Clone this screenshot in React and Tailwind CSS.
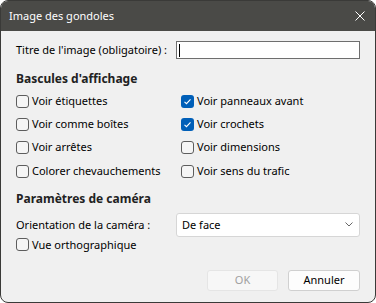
import React from "react";

const Box = ({ checked }) =>
  checked ? (
    <span className="w-[13px] h-[13px] rounded-[3px] bg-[#005fb8] flex items-center justify-center shrink-0">
      <svg width="9" height="9" viewBox="0 0 9 9">
        <path d="M1.5 4.8 L3.5 6.7 L7.5 2.3" fill="none" stroke="white" strokeWidth="1.1" />
      </svg>
    </span>
  ) : (
    <span className="w-[13px] h-[13px] rounded-[3px] border border-[#5d5d5d] bg-[#f5f5f5] shrink-0" />
  );

const Check = ({ label, checked, h = "h-[23.3px]" }) => (
  <div className={`flex items-center gap-[3px] ${h} whitespace-nowrap`}>
    <Box checked={checked} />
    <span>{label}</span>
  </div>
);

export default function App() {
  return (
    <div
      className="w-[376px] h-[303px] bg-[#f0f0f0] text-[11px] text-black flex flex-col rounded-[8px] border border-[#3a3a38] overflow-hidden"
      style={{ fontFamily: '"Noto Sans", sans-serif' }}
    >
      <div className="h-[30px] bg-[#4a4a47] text-white flex items-center justify-between pl-[8px] pr-[10px] shrink-0">
        <span className="text-[11px]">Image des gondoles</span>
        <svg width="10" height="10" viewBox="0 0 10 10">
          <path d="M0.5 0.5 L9.5 9.5 M9.5 0.5 L0.5 9.5" stroke="white" strokeWidth="1" />
        </svg>
      </div>
      <div className="flex flex-col px-[15px] pt-[10px]">
        <div className="flex items-center justify-between h-[18px] whitespace-nowrap">
          <span>Titre de l'image (obligatoire) :</span>
          <div className="w-[184px] h-[18px] border border-[#6e6e6e] bg-white flex items-center pl-[2px]">
            <span className="w-[1px] h-[13px] bg-black" />
          </div>
        </div>
        <div className="font-bold text-[#222] mt-[10.5px] h-[17px] leading-[17px] text-[12px]">Bascules d'affichage</div>
        <div className="grid grid-cols-[165px_1fr] mt-[3px]">
          <Check label="Voir étiquettes" />
          <Check label="Voir panneaux avant" checked />
          <Check label="Voir comme boîtes" />
          <Check label="Voir crochets" checked />
          <Check label="Voir arrêtes" />
          <Check label="Voir dimensions" />
          <Check label="Colorer chevauchements" />
          <Check label="Voir sens du trafic" />
        </div>
        <div className="font-bold text-[#222] mt-[7.8px] h-[17px] leading-[17px] text-[12px]">Paramètres de caméra</div>
        <div className="flex items-center justify-between mt-[5.5px] whitespace-nowrap">
          <span>Orientation de la caméra :</span>
          <div className="w-[184px] h-[24px] border border-[#d6d6d6] bg-white rounded-[3px] flex items-center justify-between pl-[5px] pr-[6px]">
            <span>De face</span>
            <svg width="8" height="5" viewBox="0 0 8 5">
              <path d="M0.5 0.5 L4 4 L7.5 0.5" fill="none" stroke="#666" strokeWidth="1" />
            </svg>
          </div>
        </div>
        <Check label="Vue orthographique" h="h-[16px]" />
        <div className="flex justify-end gap-[10px] mt-[17px]">
          <div className="w-[71px] h-[21px] rounded-[3px] border border-[#e5e5e5] bg-[#f7f7f7] text-[#a0a0a0] flex items-center justify-center">OK</div>
          <div className="w-[72px] h-[21px] rounded-[3px] border border-[#d0d0d0] bg-[#fdfdfd] flex items-center justify-center">Annuler</div>
        </div>
      </div>
    </div>
  );
}
